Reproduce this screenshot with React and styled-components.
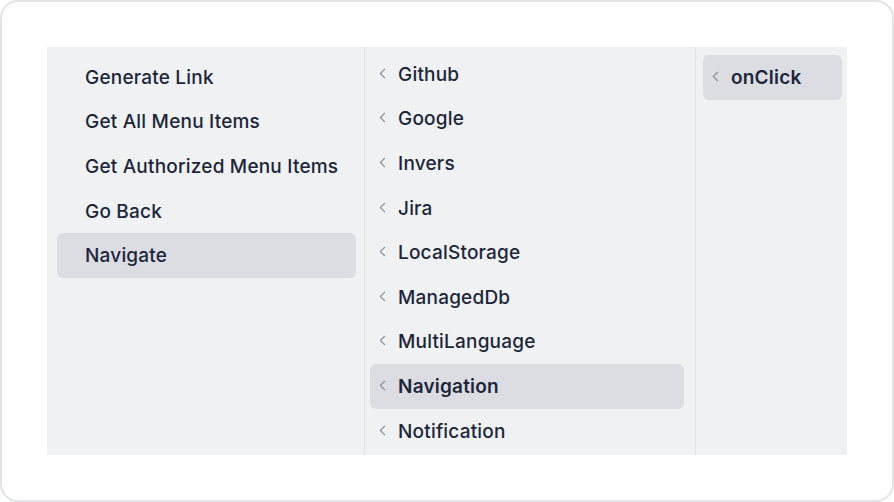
import React from "react";
import styled, { createGlobalStyle } from "styled-components";
import { ChevronLeft } from "lucide-react";

const GlobalStyle = createGlobalStyle`
  html, body {
    margin: 0;
    padding: 0;
    background: #ffffff;
    font-family: Inter, "Noto Sans", sans-serif;
  }
`;

const Card = styled.div`
  box-sizing: border-box;
  width: 894px;
  height: 502px;
  border: 2px solid #e3e5e9;
  border-radius: 18px;
  background: #fff;
  padding: 45px;
`;

const Panel = styled.div`
  display: grid;
  grid-template-columns: 318px 331px 151px;
  height: 408px;
  width: 800px;
  background: #f0f1f3;
  overflow: hidden;
`;

const Column = styled.div`
  box-sizing: border-box;
  display: flex;
  flex-direction: column;
  padding: ${(p) => p.$pad};
  border-right: ${(p) => (p.$last ? "none" : "1px solid #e0e2e6")};
  overflow: hidden;
`;

const Item = styled.div`
  box-sizing: border-box;
  flex: 0 0 44.6px;
  display: flex;
  align-items: center;
  gap: 7px;
  padding-left: ${(p) => (p.$chevron ? "4px" : "28px")};
  border-radius: 6px;
  background: ${(p) => (p.$active ? "#dcdde2" : "transparent")};
  color: #1c263a;
  font-size: 19px;
  font-weight: ${(p) => (p.$bold ? 600 : 500)};
  letter-spacing: 0.2px;
  white-space: nowrap;
`;

const Chevron = styled(ChevronLeft)`
  flex: 0 0 auto;
  color: #8b9099;
  margin-top: -2px;
`;

const left = [
  "Generate Link",
  "Get All Menu Items",
  "Get Authorized Menu Items",
  "Go Back",
  "Navigate",
];

const middle = [
  "Github",
  "Google",
  "Invers",
  "Jira",
  "LocalStorage",
  "ManagedDb",
  "MultiLanguage",
  "Navigation",
  "Notification",
];

export default function App() {
  return (
    <>
      <GlobalStyle />
      <Card>
        <Panel>
          <Column $pad="8px 8px 0 10px">
            {left.map((label) => (
              <Item key={label} $active={label === "Navigate"}>
                {label}
              </Item>
            ))}
          </Column>
          <Column $pad="5px 11px 0 5px">
            {middle.map((label) => (
              <Item
                key={label}
                $chevron
                $active={label === "Navigation"}
                $bold={label === "Navigation"}
              >
                <Chevron size={17} strokeWidth={1.6} />
                {label}
              </Item>
            ))}
          </Column>
          <Column $pad="8px 5px 0 7px" $last>
            <Item $chevron $active $bold>
              <Chevron size={17} strokeWidth={1.6} />
              onClick
            </Item>
          </Column>
        </Panel>
      </Card>
    </>
  );
}
